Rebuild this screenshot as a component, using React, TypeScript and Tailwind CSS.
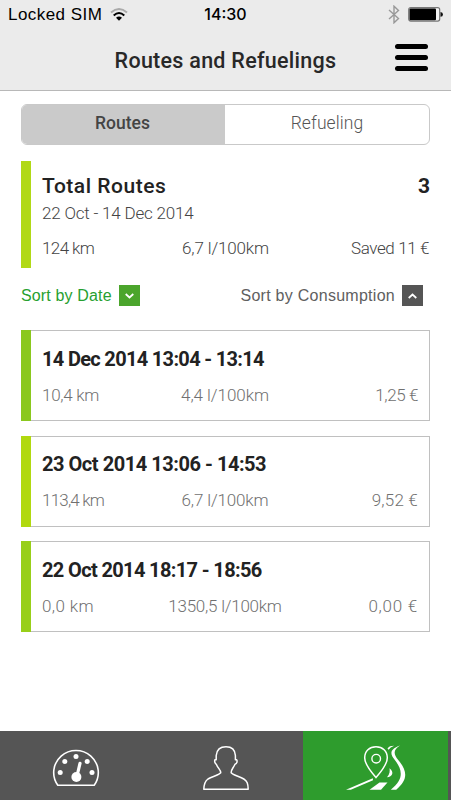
type Route = {
  title: string;
  titleTracking: string;
  distance: string;
  distanceTracking: string;
  consumption: string;
  consumptionTracking: string;
  saved: string;
  savedTracking: string;
  accent: string;
};

const routes: Route[] = [
  {
    title: "14 Dec 2014 13:04 - 13:14", titleTracking: "tracking-[-0.68px]",
    distance: "10,4 km", distanceTracking: "tracking-[-0.3px]",
    consumption: "4,4 l/100km", consumptionTracking: "tracking-[-0.05px]",
    saved: "1,25 €", savedTracking: "tracking-[-0.4px]",
    accent: "bg-[#8ac81e]",
  },
  {
    title: "23 Oct 2014 13:06 - 14:53", titleTracking: "tracking-[-0.46px]",
    distance: "113,4 km", distanceTracking: "tracking-[-0.8px]",
    consumption: "6,7 l/100km", consumptionTracking: "tracking-[-0.15px]",
    saved: "9,52 €", savedTracking: "tracking-[0.2px]",
    accent: "bg-[#b1d90f]",
  },
  {
    title: "22 Oct 2014 18:17 - 18:56", titleTracking: "tracking-[-0.64px]",
    distance: "0,0 km", distanceTracking: "tracking-[0.4px]",
    consumption: "1350,5 l/100km", consumptionTracking: "tracking-[-0.25px]",
    saved: "0,00 €", savedTracking: "tracking-[0.75px]",
    accent: "bg-[#98cf19]",
  },
];

function StatusBar() {
  return (
    <div className="grid h-[29px] grid-cols-3 items-center pr-[8px] pl-[8px] font-['Liberation_Sans',sans-serif] text-[17px] leading-[29px] text-black">
      <div className="flex items-center gap-[8px]">
        <span className="tracking-[0.45px] whitespace-nowrap">Locked SIM</span>
        <svg width="18" height="13" viewBox="0 0 18 13" fill="none">
          <path d="M1 4.5Q9-2.4 17 4.5" stroke="#aaa" strokeWidth="2" />
          <path d="M3.7 7.4Q9 2.7 14.3 7.4" stroke="#000" strokeWidth="2" />
          <path d="M6 9.7Q9 7.1 12 9.7L9 12.8Z" fill="#000" />
        </svg>
      </div>
      <span className="text-center font-['Inter',sans-serif] text-[16px] font-medium">14:30</span>
      <div className="flex items-center justify-end gap-[8px]">
        <svg width="12" height="19" viewBox="0 0 12 19" fill="none" stroke="#999" strokeWidth="1.4">
          <path d="M1 5L10.5 13.5L6 17.8V1.2L10.5 5.5L1 14" />
        </svg>
        <svg width="35" height="15" viewBox="0 0 35 15">
          <rect x=".7" y=".7" width="31" height="13.4" rx="2" fill="#f4f4f4" stroke="#777" strokeWidth="1.2" />
          <rect x="1.5" y="1.5" width="26.5" height="11.8" rx="1" fill="#000" />
          <path d="M32.5 5Q35 5.2 35 7.4Q35 9.6 32.5 9.8Z" fill="#111" />
        </svg>
      </div>
    </div>
  );
}

function Header() {
  return (
    <header className="h-[91px] shrink-0 border-b border-[#b8b8b8] bg-[#ebebeb]">
      <StatusBar />
      <div className="grid grid-cols-[1fr_auto_1fr] items-center">
        <span />
        <h1 className="pt-[1px] text-[21.5px] leading-[61px] font-medium tracking-[0.27px] whitespace-nowrap text-[#282828]">
          Routes and Refuelings
        </h1>
        <button className="mr-[23px] mb-[5px] flex w-[33px] flex-col gap-[6px] justify-self-end" aria-label="Menu">
          <span className="h-[5px] w-full rounded-full bg-black" />
          <span className="h-[5px] w-full rounded-full bg-black" />
          <span className="h-[5px] w-full rounded-full bg-black" />
        </button>
      </div>
    </header>
  );
}

function Tabs() {
  return (
    <div className="mt-[13px] flex h-[41px] overflow-hidden rounded-[6px] border border-[#c9c9c9] text-[17.5px] leading-[37px]">
      <button className="flex w-[203px] justify-center bg-[#cacaca] pr-[2px] font-medium text-[#444]">Routes</button>
      <button className="flex flex-1 justify-center font-light tracking-[0.1px] text-[#555]">Refueling</button>
    </div>
  );
}

function Summary() {
  return (
    <section className="mt-[16px] h-[107px] border-l-10 border-[#b1d916] pt-[11px] pl-[11px]">
      <div className="flex justify-between text-[21px] leading-[28px] font-medium text-[#222]">
        <span className="tracking-[0.52px]">Total Routes</span>
        <span className="font-bold">3</span>
      </div>
      <div className="text-[17px] leading-[26px] font-light tracking-[-0.2px] text-[#444]">22 Oct - 14 Dec 2014</div>
      <div className="mt-[8px] grid grid-cols-[1fr_auto_1fr] text-[17px] leading-[28px] font-light text-[#444]">
        <span className="tracking-[-0.6px] word-spacing-[2px]">124 km</span>
        <span className="pr-[21px] tracking-[-0.15px]">6,7 l/100km</span>
        <span className="pr-[1px] text-right tracking-[-0.4px]">Saved 11 €</span>
      </div>
    </section>
  );
}

function SortBar() {
  return (
    <div className="mt-[17px] flex h-[21px] items-center justify-between pr-[7px] font-['Liberation_Sans',sans-serif] text-[16px] leading-[19px]">
      <button className="flex items-center gap-[7px] text-[#27a030]">
        <span className="tracking-[0.15px]">Sort by Date</span>
        <span className="flex size-[21px] items-center justify-center bg-[#4ba52c]">
          <svg width="9" height="6" viewBox="0 0 9 6" fill="none" stroke="#fff" strokeWidth="1.7"><path d="M.7 1L4.5 4.5L8.3 1" /></svg>
        </span>
      </button>
      <button className="flex items-center gap-[7px] text-[#606060]">
        <span className="tracking-[0.27px]">Sort by Consumption</span>
        <span className="flex size-[21px] items-center justify-center bg-[#555]">
          <svg width="9" height="6" viewBox="0 0 9 6" fill="none" stroke="#fff" strokeWidth="1.7"><path d="M.7 5L4.5 1.5L8.3 5" /></svg>
        </span>
      </button>
    </div>
  );
}

function RouteCard({ route }: { route: Route }) {
  return (
    <article className="flex h-[91px]">
      <div className={`w-[10px] ${route.accent}`} />
      <div className="flex-1 border border-l-0 border-[#c0c0c0] pt-[12.5px] pr-[11px] pl-[11px]">
        <h2 className={`text-[20px] leading-[30px] font-bold text-[#222] ${route.titleTracking}`}>{route.title}</h2>
        <div className="mt-[7px] grid grid-cols-[1fr_auto_1fr] text-[17px] leading-[28px] font-light text-[#707070]">
          <span className={route.distanceTracking}>{route.distance}</span>
          <span className={`pr-[10px] ${route.consumptionTracking}`}>{route.consumption}</span>
          <span className={`text-right ${route.savedTracking}`}>{route.saved}</span>
        </div>
      </div>
    </article>
  );
}

function GaugeIcon() {
  return (
    <svg width="48" height="38" viewBox="0 0 48 38" fill="none" stroke="#fff" strokeWidth="1.6">
      <path d="M5.8 36.2A22.3 22 0 1 1 42.2 36.2Z" strokeLinejoin="round" />
      <g fill="#fff" stroke="none">
        <circle cx="8.2" cy="23.5" r="2.5" /><circle cx="12.8" cy="12.4" r="2.5" /><circle cx="24" cy="7.6" r="2.5" />
        <circle cx="35.2" cy="12.4" r="2.5" /><circle cx="40" cy="23.5" r="2.5" /><circle cx="24.4" cy="28" r="5" />
      </g>
      <path d="M25 27L28 14.4" strokeWidth="3.2" strokeLinecap="round" />
    </svg>
  );
}

function PersonIcon() {
  return (
    <svg width="46" height="45" viewBox="0 0 46 45" fill="none" stroke="#fff" strokeWidth="1.5" strokeLinejoin="round">
      <path d="M.8 43.3H45.2C45 37.5 44.2 35.2 40.8 33C36.5 30.4 30.2 29.4 28.2 26.8C27.8 24 30 22.5 32 18.2C34.3 17.8 34.4 14.5 33.6 13.7H32.4V9.5C32 3.7 28.5.8 23 .8S13.8 3.7 13.2 9.5V13.7H12C11.2 15 12 17.8 13.3 18.2C15 22.5 18 24 17.7 26.8C15.5 29.4 9 30.4 5 33C1.8 35.2 1 37.5.8 43.3Z" />
    </svg>
  );
}

function RouteIcon() {
  return (
    <svg width="60" height="46" viewBox="0 0 60 46" fill="none" stroke="#fff">
      <path d="M30 32.5C24.5 26.3 18.7 18.5 18.7 12.8C18.7 6.2 23.5 1.7 30 1.7S41.3 6.2 41.3 12.8C41.3 18.5 35.5 26.3 30 32.5Z" strokeWidth="1.5" />
      <circle cx="30.2" cy="13.7" r="4.3" strokeWidth="1.4" />
      <g fill="#fff" stroke="none">
        <path d="M0 44.7L26.8 33.2L27 35.2L4.8 44.7Z" />
        <path d="M23.5 44.7L33.5 37.6H41.5L35 44.7Z" />
        <path d="M43.5 23.3C48.5 27.2 46.5 32 41 32.3C43.8 29.3 44 26.4 43.5 23.3Z" />
        <path d="M41.5 3.6C43 1.4 44.5 .7 48.2.7C45 2 44 3 42.5 4.8Z" />
        <path d="M54 .5C47.2 4.9 47.2 8.4 52.2 15C61.3 25.7 62.5 34.6 50.2 44.7H44.8C58.3 34.5 56.3 24.6 49.2 15.5C43.2 8.3 44 4.2 54 .5Z" />
      </g>
    </svg>
  );
}

function BottomNav() {
  return (
    <nav className="flex h-[69px] shrink-0 bg-[#555]">
      <button className="flex w-[152px] items-start justify-center pt-[18px]"><GaugeIcon /></button>
      <button className="flex w-[151px] items-start justify-center pt-[15px] pr-[3px]"><PersonIcon /></button>
      <button className="flex w-[145px] items-start justify-center bg-[#2e9c2d] pt-[14px]"><RouteIcon /></button>
    </nav>
  );
}

export default function App() {
  return (
    <div className="flex h-[800px] w-full flex-col overflow-hidden bg-white font-['Roboto',sans-serif]">
      <Header />
      <main className="flex-1 pr-[21px] pl-[21px]">
        <Tabs />
        <Summary />
        <SortBar />
        <div className="mt-[24px] flex flex-col gap-[14.5px]">
          {routes.map((route) => <RouteCard key={route.title} route={route} />)}
        </div>
      </main>
      <BottomNav />
    </div>
  );
}
